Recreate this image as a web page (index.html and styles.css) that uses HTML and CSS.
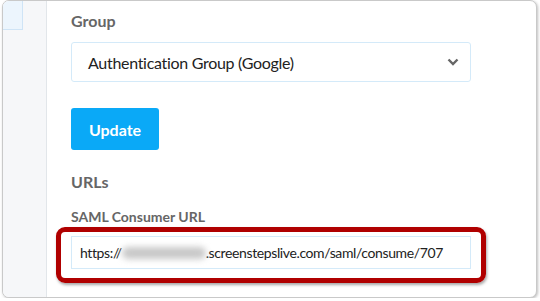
FILE: index.html
```html
<!DOCTYPE html>
<html lang="en">
<head>
  <meta charset="UTF-8" />
  <title>SAML Settings</title>
  <link rel="stylesheet" href="styles.css">
</head>
<body>
  <div class="frame">
    <div class="sidebar">
      <div class="side-tab"></div>
    </div>

    <div class="main">
      <label class="field-label">Group</label>
      <div class="select-box">
        <span>Authentication Group (Google)</span>
        <svg class="chevron" width="12" height="8" viewBox="0 0 12 8">
          <path d="M1.5 1.5 L6 6 L10.5 1.5" fill="none" stroke="#666" stroke-width="2.4" />
        </svg>
      </div>

      <button type="button" class="update-btn">Update</button>

      <h3 class="section-title">URLs</h3>
      <label class="small-label">SAML Consumer URL</label>

      <div class="highlight">
        <div class="url-input">
          https://<span class="blurred"></span>.screenstepslive.com/saml/consume/707
        </div>
      </div>
    </div>
  </div>
</body>
</html>
```

FILE: styles.css
```css
body {
  margin: 0;
  background: #fff;
  font-family: Lato, "Open Sans", sans-serif;
  color: #333;
}

.frame {
  display: flex;
  height: 296px;
  margin: 0 3px 0 2px;
  border: 1px solid #c9c9c9;
  border-radius: 7px;
  box-shadow: 1px 1px 3px rgba(0, 0, 0, 0.25);
  overflow: hidden;
  background: #fff;
}

.sidebar {
  width: 43px;
  background: #f6f7f9;
  border-right: 1px solid #e2e6ea;
}

.side-tab {
  width: 19px;
  height: 28px;
  background: #ecf5fd;
  border-right: 1px solid #cfe4f6;
  border-bottom: 1px solid #cfe4f6;
}

.main {
  flex: 1;
  padding: 10px 0 0 24px;
  display: flex;
  flex-direction: column;
  align-items: flex-start;
}

.field-label {
  font-size: 16px;
  font-weight: bold;
  color: #666;
  line-height: 20px;
}

.select-box {
  display: flex;
  align-items: center;
  justify-content: space-between;
  box-sizing: border-box;
  width: 400px;
  height: 40px;
  margin-top: 11px;
  padding: 0 11px 0 16px;
  border: 1px solid #d4eaf9;
  border-radius: 3px;
  font-size: 16px;
  letter-spacing: -0.3px;
  color: #222;
}

.update-btn {
  margin-top: 26px;
  width: 88px;
  height: 42px;
  border: none;
  border-radius: 3px;
  background: #0aa9f7;
  color: #fff;
  font-family: inherit;
  font-size: 16px;
  font-weight: bold;
}

.section-title {
  margin: 22px 0 0;
  font-size: 16px;
  font-weight: bold;
  color: #666;
  line-height: 20px;
}

.small-label {
  margin-top: 16px;
  font-size: 14px;
  font-weight: bold;
  color: #666;
  line-height: 18px;
}

.highlight {
  margin: 1px 0 0 -15px;
  padding: 4px 10px 9px 10px;
  border: 5px solid #b00000;
  border-radius: 9px;
  box-shadow: 1px 2px 3px rgba(0, 0, 0, 0.35);
}

.url-input {
  box-sizing: border-box;
  width: 400px;
  height: 33px;
  padding: 0 8px;
  border: 1px solid #d4eaf9;
  font-size: 14px;
  letter-spacing: -0.38px;
  line-height: 31px;
  color: #222;
  white-space: nowrap;
}

.blurred {
  display: inline-block;
  width: 84px;
  height: 12px;
  vertical-align: -1px;
  background: #c8c8c8;
  border-radius: 6px;
  filter: blur(3px);
}
```
